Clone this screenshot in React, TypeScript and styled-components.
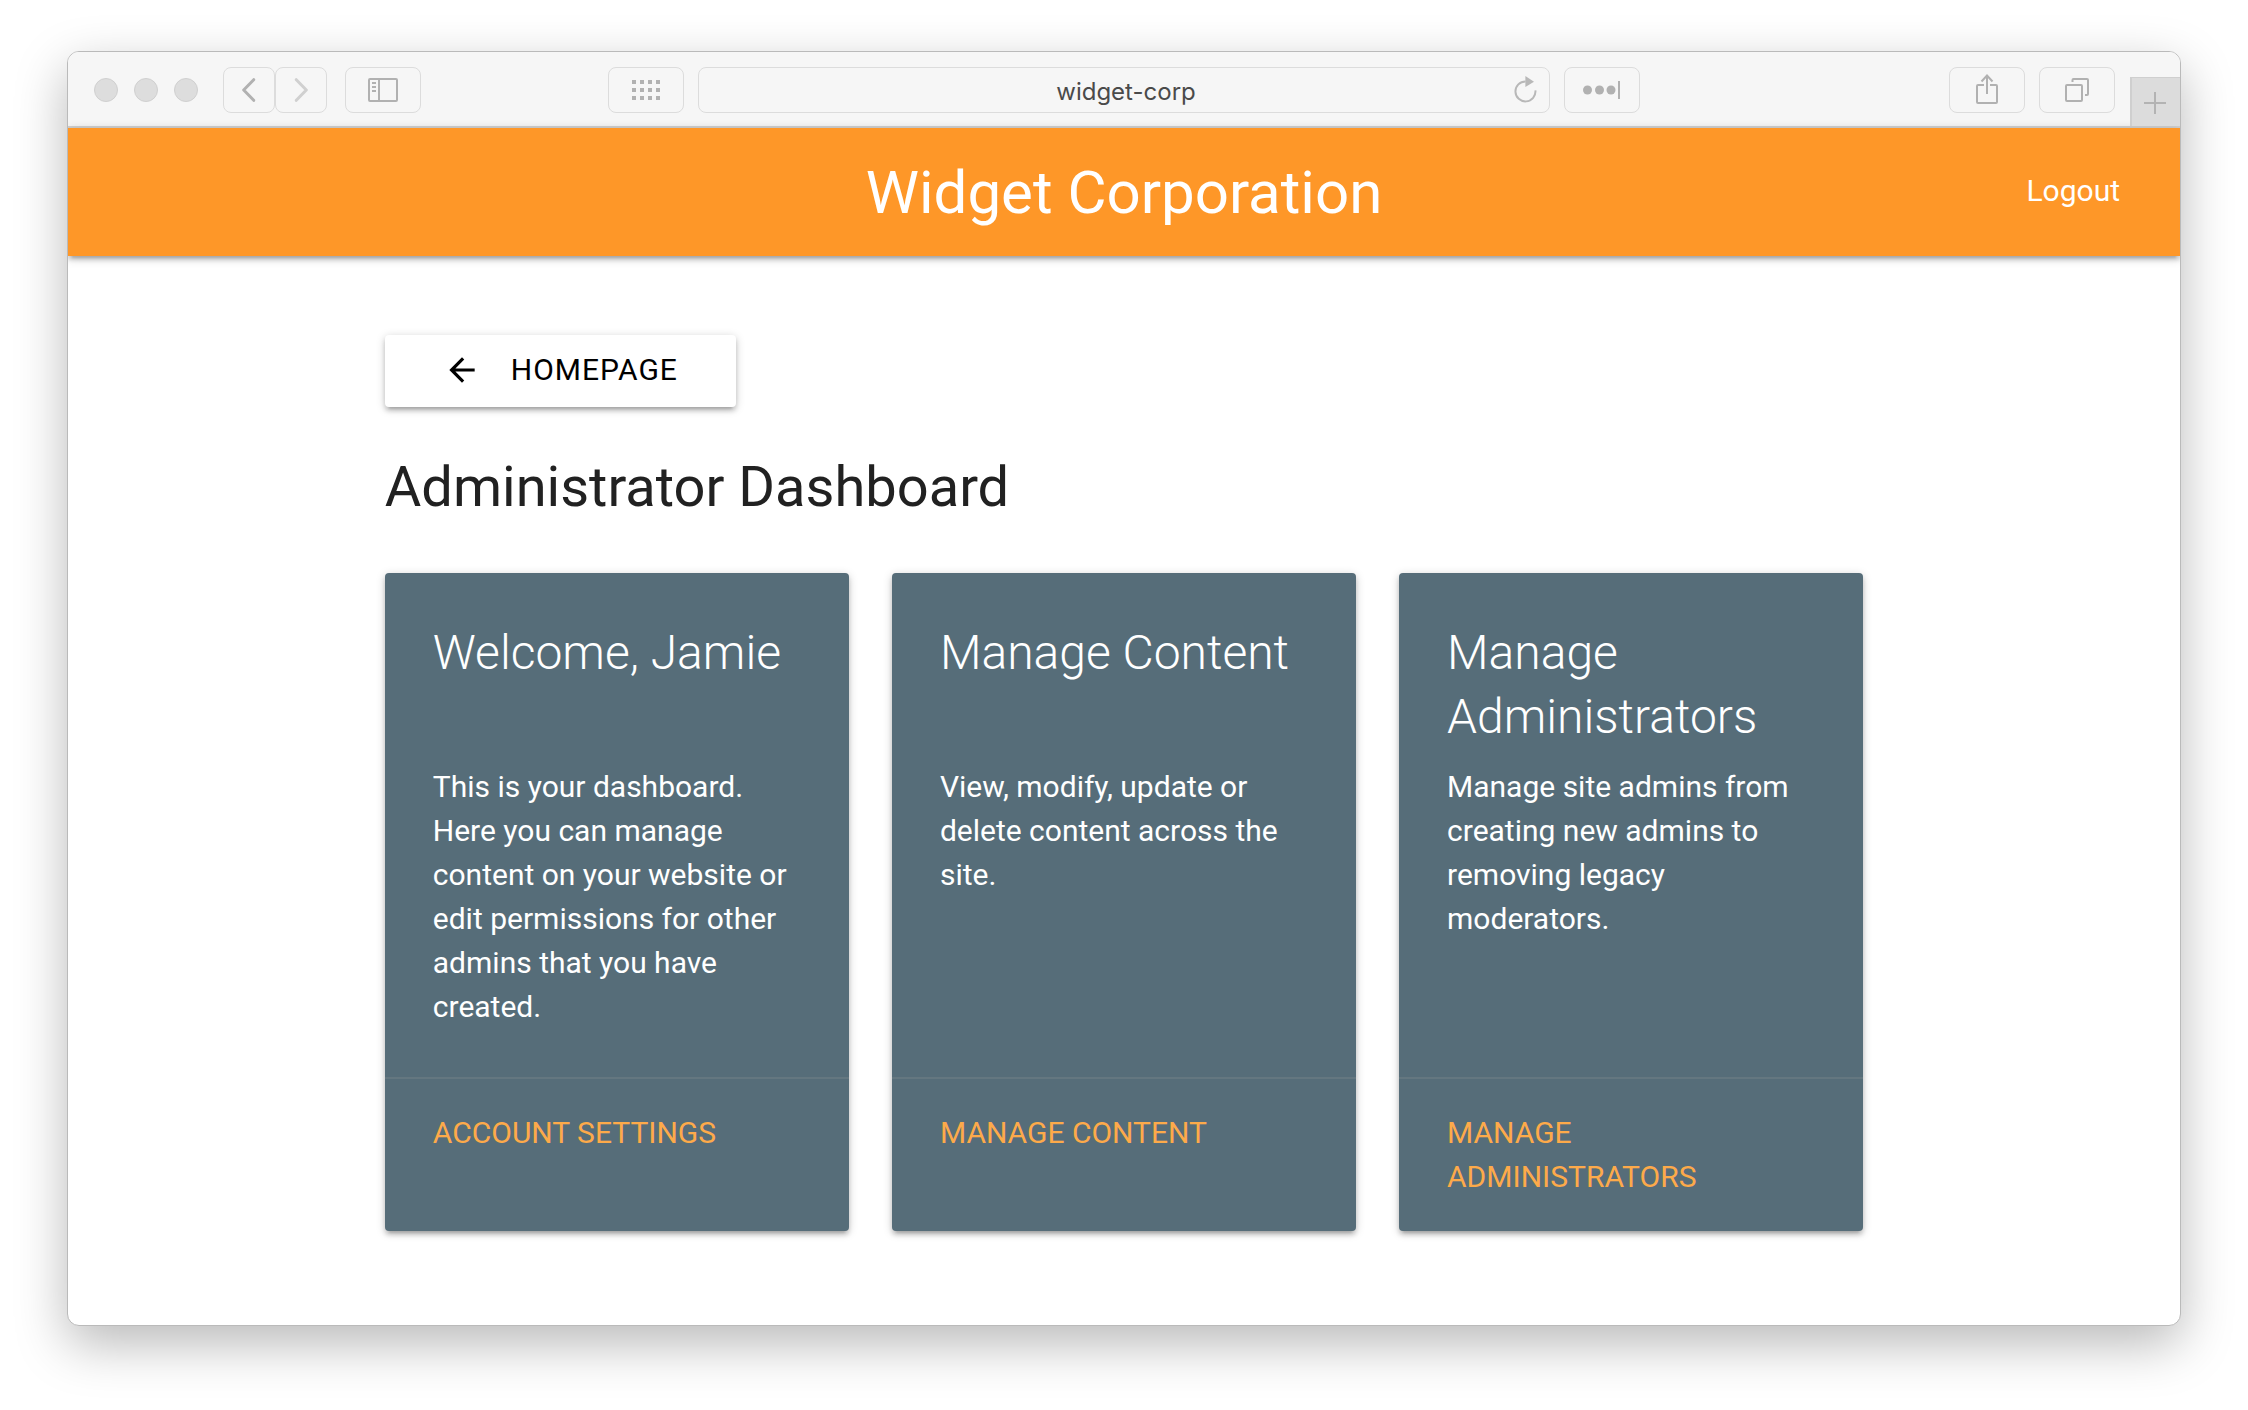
import React from "react";
import styled, { createGlobalStyle } from "styled-components";

const colors = {
  orange: "#fe9728",
  slate: "#566d79",
  link: "#fdaa4a",
  ink: "#212121",
  chrome: "#f6f6f6",
  chromeLine: "#dcdcdc",
  glyph: "#b1b1b1",
  glyphOff: "#d0d0d0",
};

const raised =
  "0 4px 4px 0 rgba(0,0,0,0.14), 0 6px 2px -4px rgba(0,0,0,0.12), 0 2px 10px 0 rgba(0,0,0,0.2)";

const GlobalStyle = createGlobalStyle`
  *, *::before, *::after { box-sizing: border-box; }
  body {
    margin: 0;
    background: #fff;
    color: ${colors.ink};
    font-family: Roboto, "Liberation Sans", sans-serif;
    font-size: 30px;
    line-height: 44px;
  }
`;

const Desktop = styled.div`
  padding: 51px 67px 83px;
`;

const BrowserWindow = styled.div`
  border: 1px solid #bababa;
  border-radius: 12px;
  background: #fff;
  overflow: hidden;
  box-shadow: 0 18px 52px rgba(0, 0, 0, 0.28);
`;

const Toolbar = styled.div`
  display: grid;
  grid-template-columns: 1fr minmax(0, 1032px) 1fr;
  background: ${colors.chrome};
  border-bottom: 2px solid #d0d0d0;
`;

const ToolGroup = styled.div<{ $gap: number; $end?: boolean }>`
  display: flex;
  align-items: center;
  gap: ${(p) => p.$gap}px;
  padding: 15px 0 13px;
  justify-content: ${(p) => (p.$end ? "flex-end" : "flex-start")};
`;

const LeftTools = styled.div`
  display: flex;
  align-items: center;
  padding-left: 26px;
`;

const RightTools = styled.div`
  display: flex;
  justify-content: flex-end;
  gap: 15px;
`;

const Lights = styled.div`
  display: flex;
  gap: 16px;
  margin-right: 25px;
  padding-top: 2px;
`;

const Light = styled.span`
  width: 24px;
  height: 24px;
  border: 1px solid #d0d0d0;
  border-radius: 50%;
  background: #dddddd;
`;

const HistoryButtons = styled.div`
  display: flex;
`;

const ToolButton = styled.button<{ $narrow?: boolean; $off?: boolean }>`
  display: flex;
  align-items: center;
  justify-content: center;
  flex: none;
  width: ${(p) => (p.$narrow ? 52 : 76)}px;
  height: 46px;
  padding: 0;
  border: 1px solid ${colors.chromeLine};
  border-radius: 8px;
  background: ${colors.chrome};
  color: ${(p) => (p.$off ? colors.glyphOff : colors.glyph)};
`;

const NewTab = styled.button`
  display: flex;
  align-items: center;
  justify-content: center;
  align-self: flex-end;
  width: 50px;
  height: 49px;
  padding: 2px 2px 0 0;
  border: solid #cfcfcf;
  border-width: 1px 0 0 2px;
  background: #dcdcdc;
  color: #b3b3b3;
`;

const AddressBar = styled.div`
  display: flex;
  align-items: center;
  flex: 1;
  min-width: 0;
  height: 46px;
  padding: 0 12px;
  border: 1px solid ${colors.chromeLine};
  border-radius: 8px;
`;

const Address = styled.input`
  flex: 1;
  min-width: 0;
  height: 34px;
  padding: 2px 0 0 28px;
  border: 0;
  outline: 0;
  background: transparent;
  color: #4a4a4a;
  font: 400 24px/32px Inter, "Liberation Sans", sans-serif;
  text-align: center;
`;

const Reload = styled.button`
  display: flex;
  padding: 0;
  border: 0;
  background: transparent;
  color: #b8b8b8;
`;

const Glyph = styled.svg<{ $weight?: number }>`
  display: block;
  flex: none;
  fill: none;
  stroke: currentColor;
  stroke-width: ${(p) => p.$weight ?? 2};
`;

const NavBar = styled.header`
  display: grid;
  grid-template-columns: 1fr auto 1fr;
  align-items: center;
  height: 128px;
  padding: 0 60px;
  background: ${colors.orange};
  color: #fff;
  box-shadow: ${raised};
`;

const Brand = styled.h1`
  grid-column: 2;
  margin: 0;
  padding-top: 2px;
  font-size: 60px;
  line-height: 64px;
  font-weight: 400;
`;

const Logout = styled.a`
  justify-self: end;
  padding-bottom: 2px;
  color: #fff;
  text-decoration: none;
`;

const Main = styled.main`
  width: 70%;
  margin: 0 auto;
  padding: 79px 0 94px;
`;

const HomeButton = styled.button`
  display: flex;
  align-items: center;
  gap: 30px;
  height: 72px;
  padding: 0 58px 2px;
  border: 0;
  border-radius: 4px;
  background: #fff;
  color: #000;
  font: inherit;
  letter-spacing: 1px;
  text-transform: uppercase;
  box-shadow: ${raised};
`;

const PageTitle = styled.h2`
  margin: 48px 0 54px;
  font-size: 56px;
  line-height: 64px;
  font-weight: 400;
`;

const Cards = styled.section`
  display: grid;
  grid-template-columns: repeat(3, minmax(0, 1fr));
  gap: 43px;
`;

const CardBox = styled.article`
  display: flex;
  flex-direction: column;
  border-radius: 4px;
  background: ${colors.slate};
  color: #fff;
  box-shadow: ${raised};
`;

const CardContent = styled.div`
  flex: 1;
  padding: 48px;
`;

const CardTitle = styled.h3`
  min-height: 128px;
  margin: 0 0 16px;
  font-size: 48px;
  line-height: 64px;
  font-weight: 300;
`;

const CardText = styled.p`
  margin: 0;
`;

const CardAction = styled.div`
  min-height: 154px;
  padding: 32px 48px;
  border-top: 2px solid rgba(160, 160, 160, 0.2);
`;

const ActionLink = styled.a`
  color: ${colors.link};
  text-decoration: none;
  text-transform: uppercase;
`;

const cards = [
  {
    title: "Welcome, Jamie",
    text: "This is your dashboard. Here you can manage content on your website or edit permissions for other admins that you have created.",
    action: "Account settings",
  },
  {
    title: "Manage Content",
    text: "View, modify, update or delete content across the site.",
    action: "Manage content",
  },
  {
    title: "Manage Administrators",
    text: "Manage site admins from creating new admins to removing legacy moderators.",
    action: "Manage administrators",
  },
];

function BrowserToolbar() {
  return (
    <Toolbar>
      <LeftTools>
        <Lights>
          <Light />
          <Light />
          <Light />
        </Lights>
        <ToolGroup $gap={18}>
          <HistoryButtons>
            <ToolButton $narrow aria-label="Back">
              <Glyph $weight={3} width="24" height="24" strokeLinecap="round" strokeLinejoin="round">
                <path d="M16.7 1.7L6.7 12l10 10.3" />
              </Glyph>
            </ToolButton>
            <ToolButton $narrow $off aria-label="Forward">
              <Glyph $weight={3} width="24" height="24" strokeLinecap="round" strokeLinejoin="round">
                <path d="M7.3 1.7l10 10.3-10 10.3" />
              </Glyph>
            </ToolButton>
          </HistoryButtons>
          <ToolButton aria-label="Show sidebar">
            <Glyph width="30" height="24">
              <rect x="1" y="1" width="28" height="22" rx="1" />
              <path d="M11 1v22M4 5h4M4 9h4M4 13h4" />
            </Glyph>
          </ToolButton>
        </ToolGroup>
      </LeftTools>
      <ToolGroup $gap={14}>
        <ToolButton aria-label="Top sites">
          <Glyph $weight={4} width="28" height="20" strokeDasharray="4 4">
            <path d="M0 2h28M0 10h28M0 18h28" />
          </Glyph>
        </ToolButton>
        <AddressBar>
          <Address aria-label="Address" defaultValue="widget-corp" />
          <Reload aria-label="Reload">
            <Glyph width="24" height="30">
              <path d="M22.4 15.3A10 10 0 1 1 12.6 6.4" />
              <path d="M12.4 1L21 6.7L12.4 12z" fill="currentColor" stroke="none" />
            </Glyph>
          </Reload>
        </AddressBar>
        <ToolButton aria-label="Reader">
          <Glyph width="38" height="18">
            <g fill="currentColor" stroke="none">
              <circle cx="4.5" cy="9" r="4.5" />
              <circle cx="16.5" cy="9" r="4.5" />
              <circle cx="28" cy="9" r="4.5" />
            </g>
            <path d="M36 0v18" />
          </Glyph>
        </ToolButton>
      </ToolGroup>
      <RightTools>
        <ToolGroup $gap={14} $end>
          <ToolButton aria-label="Share">
            <Glyph width="24" height="32">
              <path d="M9 11H3a1 1 0 0 0-1 1v16a1 1 0 0 0 1 1h18a1 1 0 0 0 1-1V12a1 1 0 0 0-1-1h-6" />
              <path d="M12 1.5V20M6.5 7.5L12 1.5l5.5 6" />
            </Glyph>
          </ToolButton>
          <ToolButton aria-label="Show tabs">
            <Glyph width="24" height="24">
              <rect x="1" y="7" width="16" height="16" rx="1" />
              <path d="M7.5 4V2a1 1 0 0 1 1-1H22a1 1 0 0 1 1 1v14a1 1 0 0 1-1 1h-2" />
            </Glyph>
          </ToolButton>
        </ToolGroup>
        <NewTab aria-label="New tab">
          <Glyph width="22" height="22">
            <path d="M11 0v22M0 11h22" />
          </Glyph>
        </NewTab>
      </RightTools>
    </Toolbar>
  );
}

export default function App() {
  return (
    <>
      <GlobalStyle />
      <Desktop>
        <BrowserWindow>
          <BrowserToolbar />
          <NavBar>
            <Brand>Widget Corporation</Brand>
            <Logout href="#logout">Logout</Logout>
          </NavBar>
          <Main>
            <HomeButton>
              <Glyph width="38" height="38" viewBox="0 0 24 24">
                <path
                  d="M20 11H7.83l5.59-5.59L12 4l-8 8 8 8 1.41-1.41L7.83 13H20v-2z"
                  fill="currentColor"
                  stroke="none"
                />
              </Glyph>
              Homepage
            </HomeButton>
            <PageTitle>Administrator Dashboard</PageTitle>
            <Cards>
              {cards.map((card) => (
                <CardBox key={card.title}>
                  <CardContent>
                    <CardTitle>{card.title}</CardTitle>
                    <CardText>{card.text}</CardText>
                  </CardContent>
                  <CardAction>
                    <ActionLink href="#">{card.action}</ActionLink>
                  </CardAction>
                </CardBox>
              ))}
            </Cards>
          </Main>
        </BrowserWindow>
      </Desktop>
    </>
  );
}
